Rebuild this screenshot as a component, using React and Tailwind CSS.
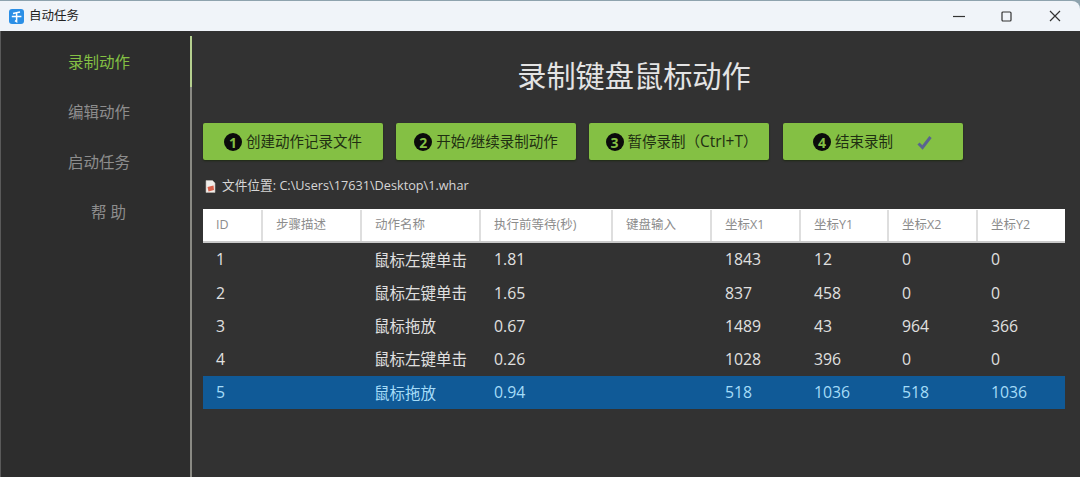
const font = { fontFamily: '"Open Sans","Noto Sans CJK SC",sans-serif' };
const cols = "grid grid-cols-[60px_99px_119px_132px_99px_89px_88px_89px_87px]";
const heads = ["ID","步骤描述","动作名称","执行前等待(秒)","键盘输入","坐标X1","坐标Y1","坐标X2","坐标Y2"];
const rows = [
  ["1","","鼠标左键单击","1.81","","1843","12","0","0"],
  ["2","","鼠标左键单击","1.65","","837","458","0","0"],
  ["3","","鼠标拖放","0.67","","1489","43","964","366"],
  ["4","","鼠标左键单击","0.26","","1028","396","0","0"],
  ["5","","鼠标拖放","0.94","","518","1036","518","1036"],
];
const btns = [
  ["1", <>创建动作记录文件</>],
  ["2", <>开始/继续录制动作</>],
  ["3", <>暂停录制（<span className="text-[15.5px]">Ctrl+T</span>）</>],
  ["4", <>结束录制</>],
];

function AppIcon() {
  return (
    <svg width="15" height="15" viewBox="0 0 15 15">
      <rect width="15" height="15" rx="3" fill="#2b8fe6" />
      <path d="M4 4.6 L11 3 M2.8 7.4 H12.4 M7.6 4 V12.6 L6 11.6" stroke="#fff" strokeWidth="1.5" fill="none" />
    </svg>
  );
}
function FileIcon() {
  return (
    <svg width="11" height="13" viewBox="0 0 11 13">
      <path d="M1 0.5 H7.5 L10 3 V12.5 H1 Z" fill="#f1eeea" stroke="#b9b4ae" strokeWidth="0.6" />
      <path d="M2.5 7 L8.5 5.5 L9 10 L3.5 11.5 Z" fill="#d8604a" />
    </svg>
  );
}
export default function App() {
  return (
    <div className="w-[1080px] h-[477px] flex flex-col overflow-hidden bg-[#8ea3ae]" style={font}>
      <div className="h-[30px] shrink-0 mt-px bg-[#f0f4f9] rounded-tr-lg flex items-center pl-[9px]">
        <AppIcon />
        <span className="ml-[5px] text-[12.5px] text-[#222]">自动任务</span>
        <div className="ml-auto flex items-center pr-[19px]">
          <svg width="14" height="14" viewBox="0 0 14 14" className="mr-[35px]"><path d="M1 7.5H13" stroke="#333" strokeWidth="1.2" /></svg>
          <svg width="11" height="11" viewBox="0 0 11 11" className="mr-[37px]"><rect x="1" y="1" width="9" height="9" rx="1" fill="none" stroke="#333" strokeWidth="1.2" /></svg>
          <svg width="12" height="12" viewBox="0 0 12 12"><path d="M1 1L11 11M11 1L1 11" stroke="#333" strokeWidth="1.2" /></svg>
        </div>
      </div>
      <div className="flex-1 flex bg-[#323232] min-h-0">
        <nav className="w-[190px] shrink-0 bg-[#2d2d2d] border-l border-[#5a5a5a] pl-[67px] pt-[7px] flex flex-col text-[15.5px] text-[#8d8d8d]">
          <div className="h-[50px] flex items-center text-[#84c044]">录制动作</div>
          <div className="h-[50px] flex items-center">编辑动作</div>
          <div className="h-[50px] flex items-center">启动任务</div>
          <div className="h-[50px] flex items-center pl-[23px]">帮 助</div>
        </nav>
        <div className="w-[2px] shrink-0 bg-[#8a8a84] mt-[5px] flex flex-col">
          <div className="h-[51px] bg-[#b5d08f]" />
        </div>
        <main className="flex-1 pl-[11px] pr-[15px] flex flex-col">
          <h1 className="h-[92px] pt-[23px] text-center text-[29.2px] leading-[44px] text-[#e4e4e4] font-normal">录制键盘鼠标动作</h1>
          <div className="flex">
            {btns.map(([n, t], i) => (
              <div key={n} className={`w-[180px] h-[37px] pt-px rounded-[2px] bg-[#84c044] shadow-[0_1px_2px_#1f2a14] flex items-center justify-center text-[14.5px] text-[#1f2f12] ${i === 3 ? "ml-[14px]" : i === 0 ? "" : "ml-[13px]"} ${i === 2 ? "pl-[5px]" : ""}`}>
                <span className="w-[18px] h-[18px] rounded-full bg-[#0b0b0b] text-[#84c044] text-[14px] font-bold flex items-center justify-center mr-[4px] shrink-0">{n}</span>
                <span className="whitespace-nowrap">{t}</span>
                {i === 3 && (
                  <svg width="17" height="15" viewBox="0 0 17 15" className="ml-[23px]">
                    <path d="M2.5 8.5 L6.5 12.5 L14.5 2" fill="none" stroke="#5a6490" strokeWidth="3" />
                  </svg>
                )}
              </div>
            ))}
          </div>
          <div className="h-[49px] flex items-center pl-[2px] pt-[3px] text-[12.7px] text-[#d6d6d6]">
            <FileIcon />
            <span className="ml-[6px]">文件位置: C:\Users\17631\Desktop\1.whar</span>
          </div>
          <div className={`${cols} h-[34px] pt-px bg-white border-b-2 border-[#c9c9c9] text-[12.5px] text-[#8c8c8c]`}>
            {heads.map((h) => (
              <div key={h} className="flex items-center pl-[13px] border-r-2 border-[#dedede] last:border-r-0 whitespace-nowrap">{h}</div>
            ))}
          </div>
          {rows.map((r, i) => (
            <div key={i} className={`${cols} h-[33.25px] pt-px text-[15.8px] ${i === 4 ? "bg-[#105a97] text-[#a5dcf8]" : "text-[#e0e0e0]"}`}>
              {r.map((c, j) => (
                <div key={j} className={`flex items-center whitespace-nowrap ${j === 2 ? "pl-[12px] text-[15.5px]" : "pl-[13px]"}`}>{c}</div>
              ))}
            </div>
          ))}
        </main>
      </div>
    </div>
  );
}
